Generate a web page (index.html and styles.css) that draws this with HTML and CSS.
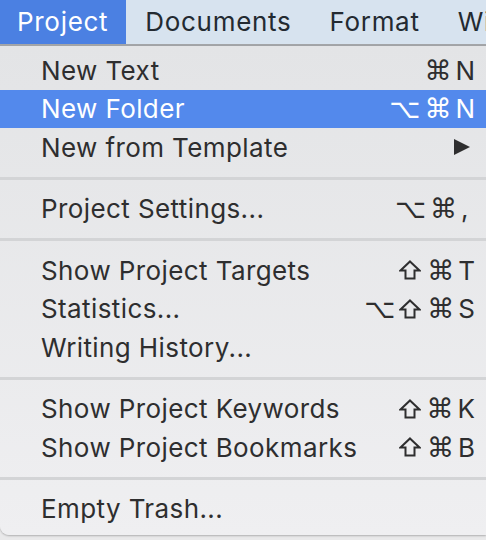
FILE: index.html
```html
<!DOCTYPE html>
<html lang="en">
<head>
    <meta charset="UTF-8">
    <meta name="viewport" content="width=device-width, initial-scale=1.0">
    <title>Project Menu</title>
    <link rel="stylesheet" href="styles.css">
</head>
<body>
    <div class="menu-bar">
        <div class="bar-item active">Project</div>
        <div class="bar-item">Documents</div>
        <div class="bar-item">Format</div>
        <div class="bar-item">Window</div>
    </div>

    <div class="menu">
        <div class="item"><span>New Text</span><span class="keys"><span class="sym">⌘</span>N</span></div>
        <div class="item selected"><span>New Folder</span><span class="keys"><span class="sym">⌥</span><span class="sym">⌘</span>N</span></div>
        <div class="item"><span>New from Template</span><span class="keys"><svg class="arrow" viewBox="0 0 18 18"><polygon points="1,1 17,9 1,17" /></svg></span></div>
        <div class="sep"></div>
        <div class="item"><span>Project Settings...</span><span class="keys"><span class="sym">⌥</span><span class="sym">⌘</span><span class="comma">,</span></span></div>
        <div class="sep"></div>
        <div class="item"><span>Show Project Targets</span><span class="keys"><svg class="shift" viewBox="0 0 22 20"><path d="M11 1.5 L20.5 10.5 H15.5 V18.5 H6.5 V10.5 H1.5 Z" /></svg><span class="sym">⌘</span>T</span></div>
        <div class="item"><span>Statistics...</span><span class="keys"><span class="sym">⌥</span><svg class="shift" viewBox="0 0 22 20"><path d="M11 1.5 L20.5 10.5 H15.5 V18.5 H6.5 V10.5 H1.5 Z" /></svg><span class="sym">⌘</span>S</span></div>
        <div class="item"><span>Writing History...</span></div>
        <div class="sep"></div>
        <div class="item"><span>Show Project Keywords</span><span class="keys"><svg class="shift" viewBox="0 0 22 20"><path d="M11 1.5 L20.5 10.5 H15.5 V18.5 H6.5 V10.5 H1.5 Z" /></svg><span class="sym">⌘</span>K</span></div>
        <div class="item"><span>Show Project Bookmarks</span><span class="keys"><svg class="shift" viewBox="0 0 22 20"><path d="M11 1.5 L20.5 10.5 H15.5 V18.5 H6.5 V10.5 H1.5 Z" /></svg><span class="sym">⌘</span>B</span></div>
        <div class="sep"></div>
        <div class="item"><span>Empty Trash...</span></div>
    </div>
</body>
</html>
```

FILE: styles.css
```css
body {
    margin: 0;
    padding: 0;
    width: 486px;
    height: 540px;
    overflow: hidden;
    background-color: #e9e9ea;
    font-family: Inter, "Liberation Sans", sans-serif;
    font-size: 26px;
    letter-spacing: 0.4px;
    color: #2e2e2f;
}
.menu-bar {
    display: flex;
    height: 44px;
    background-color: #d7e3ef;
    border-bottom: 2px solid #a3a5a8;
    white-space: nowrap;
}
.bar-item {
    padding: 0 19px;
    line-height: 44px;
    letter-spacing: 0.7px;
    color: #232a31;
}
.bar-item.active {
    padding: 0 18px 0 17px;
    background-color: #4b80e2;
    color: white;
}
.menu {
    padding: 5px 0 7px;
    background: linear-gradient(#e3e4e6, #efeff1);
    border-bottom-left-radius: 9px;
    box-shadow: 0 1px 2px rgba(0, 0, 0, 0.25);
}
.item {
    display: flex;
    justify-content: space-between;
    align-items: center;
    height: 38.5px;
    padding: 0 11px 0 41px;
    white-space: nowrap;
}
.item.selected {
    background-color: #5389ec;
    color: white;
}
.keys {
    display: flex;
    align-items: center;
    gap: 4px;
    letter-spacing: 0;
}
.sym {
    font-family: "DejaVu Sans", sans-serif;
    font-size: 27px;
}
.comma {
    width: 14px;
}
.shift {
    width: 22px;
    height: 20px;
    margin-right: 2px;
    fill: none;
    stroke: currentColor;
    stroke-width: 2;
    stroke-linejoin: miter;
}
.arrow {
    width: 18px;
    height: 18px;
    margin-right: 4px;
    fill: currentColor;
}
.sep {
    height: 3px;
    margin: 10px 0;
    background-color: #d3d4d6;
}
```
